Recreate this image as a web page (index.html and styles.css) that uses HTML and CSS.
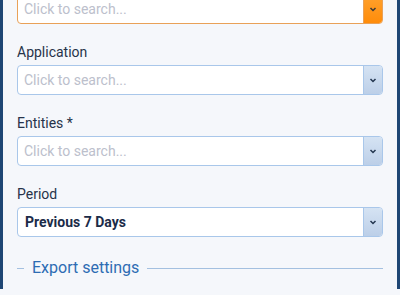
FILE: index.html
```html
<!DOCTYPE html>
<html lang="en">
<head>
    <meta charset="UTF-8">
    <meta name="viewport" content="width=device-width, initial-scale=1.0">
    <title>Report filters</title>
    <link rel="stylesheet" href="styles.css">
</head>
<body>
    <div class="panel">
        <div class="field first">
            <div class="combo focused">
                <span class="placeholder">Click to search...</span>
                <span class="toggle">
                    <svg width="8" height="5" viewBox="0 0 8 5"><path d="M1.5 1 L4 3.5 L6.5 1" fill="none" stroke="#3a3a3a" stroke-width="1.5"/></svg>
                </span>
            </div>
        </div>

        <div class="field">
            <label class="label">Application</label>
            <div class="combo">
                <span class="placeholder">Click to search...</span>
                <span class="toggle">
                    <svg width="8" height="5" viewBox="0 0 8 5"><path d="M1.5 1 L4 3.5 L6.5 1" fill="none" stroke="#233650" stroke-width="1.5"/></svg>
                </span>
            </div>
        </div>

        <div class="field">
            <label class="label">Entities *</label>
            <div class="combo">
                <span class="placeholder">Click to search...</span>
                <span class="toggle">
                    <svg width="8" height="5" viewBox="0 0 8 5"><path d="M1.5 1 L4 3.5 L6.5 1" fill="none" stroke="#233650" stroke-width="1.5"/></svg>
                </span>
            </div>
        </div>

        <div class="field">
            <label class="label">Period</label>
            <div class="combo">
                <span class="value">Previous 7 Days</span>
                <span class="toggle">
                    <svg width="8" height="5" viewBox="0 0 8 5"><path d="M1.5 1 L4 3.5 L6.5 1" fill="none" stroke="#233650" stroke-width="1.5"/></svg>
                </span>
            </div>
        </div>

        <div class="section">
            <span class="dash"></span>
            <span class="section-title">Export settings</span>
            <span class="line"></span>
        </div>
    </div>
</body>
</html>
```

FILE: styles.css
```css
body {
    margin: 0;
    font-family: Roboto, "Liberation Sans", sans-serif;
    background: #f5f7fb;
    overflow: hidden;
}
.panel {
    height: 295px;
    box-sizing: border-box;
    border-left: 3px solid #1f4674;
    border-right: 3px solid #1f4674;
    padding: 0 14px;
    background: #f5f7fb;
}
.field {
    margin-bottom: 20px;
}
.field.first {
    margin-top: -6px;
}
.label {
    display: block;
    font-size: 14px;
    line-height: 17px;
    color: #27334a;
    margin-bottom: 4px;
}
.combo {
    display: flex;
    align-items: center;
    height: 30px;
    box-sizing: border-box;
    border: 1px solid #a9c7ea;
    border-radius: 4px;
    background: white;
    overflow: hidden;
}
.combo.focused {
    border-color: #e9a158;
}
.placeholder,
.value {
    flex: 1;
    padding-left: 6px;
    font-size: 14px;
    color: #bcc0cc;
}
.value {
    padding-left: 7px;
    font-weight: bold;
    color: #1b2b48;
}
.toggle {
    display: flex;
    align-items: center;
    justify-content: center;
    width: 18px;
    height: 100%;
    border-left: 1px solid #a9c7ea;
    background: linear-gradient(#d5e3f3, #bccfe8);
}
.focused .toggle {
    border-left-color: #e9a158;
    background: linear-gradient(#ffa22e, #ff8c0a);
}
.section {
    display: flex;
    align-items: center;
    margin-top: 21px;
}
.dash {
    width: 7px;
    height: 1px;
    background: #a4c0e0;
}
.section-title {
    padding: 0 8px;
    font-size: 16px;
    line-height: 20px;
    color: #2d6cb3;
}
.line {
    flex: 1;
    height: 1px;
    background: #a4c0e0;
}
```
